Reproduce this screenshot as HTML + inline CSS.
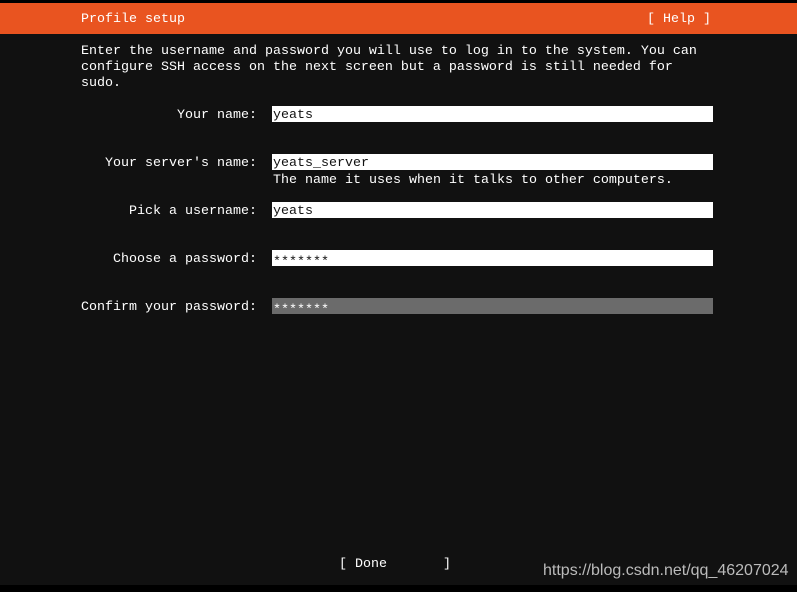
<!DOCTYPE html>
<html><head><style>
body{margin:0;width:797px;height:592px;background:#111;overflow:hidden;position:relative;font-family:"Liberation Mono",monospace;font-size:13.33px;color:#fff}
div{position:absolute;white-space:pre;line-height:16px}
.t{padding-top:2px}
.f{left:272px;width:441px;height:16px;background:#fff;color:#111;padding-left:1px;box-sizing:border-box}
.f span{position:relative;top:2px}
.l{right:540px;text-align:right;padding-top:2px}
</style></head><body>
<div style="left:0;top:0;width:797px;height:3px;background:#000"></div>
<div style="left:0;top:3px;width:797px;height:31px;background:#e95420"></div>
<div class="t" style="left:81px;top:10px">Profile setup</div>
<div class="t" style="left:647px;top:10px">[ Help ]</div>
<div class="t" style="left:81px;top:42px">Enter the username and password you will use to log in to the system. You can
configure SSH access on the next screen but a password is still needed for
sudo.</div>
<div class="l" style="top:106px">Your name:</div>
<div class="f" style="top:106px"><span>yeats</span></div>
<div class="l" style="top:154px">Your server's name:</div>
<div class="f" style="top:154px"><span>yeats_server</span></div>
<div class="t" style="left:273px;top:171px">The name it uses when it talks to other computers.</div>
<div class="l" style="top:202px">Pick a username:</div>
<div class="f" style="top:202px"><span>yeats</span></div>
<div class="l" style="top:250px">Choose a password:</div>
<div class="f" style="top:250px"><span style="top:5px">*******</span></div>
<div class="l" style="top:298px">Confirm your password:</div>
<div class="f" style="top:298px;background:#6b6b6b;color:#fff"><span style="top:5px">*******</span></div>
<div class="t" style="left:339px;top:555px">[ Done       ]</div>
<div style="left:543px;top:563px;font-family:'Liberation Sans',sans-serif;font-size:16px;color:#bbb">https://blog.csdn.net/qq_46207024</div>
<div style="left:0;top:585px;width:797px;height:7px;background:#000"></div>
</body></html>
